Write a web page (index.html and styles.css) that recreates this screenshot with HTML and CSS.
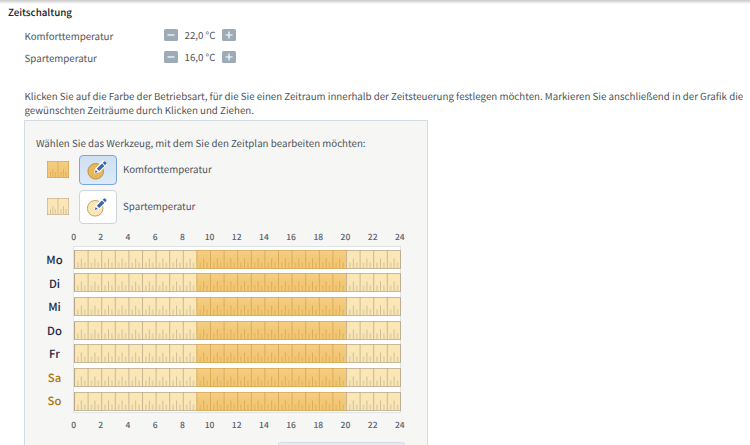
FILE: index.html
```html
<!DOCTYPE html>
<html lang="de">
<head>
<meta charset="utf-8">
<title>Zeitschaltung</title>
<link rel="stylesheet" href="styles.css">
</head>
<body>
<svg class="defs" aria-hidden="true">
  <defs>
    <linearGradient id="warm" x1="0" y1="0" x2="0" y2="1"><stop offset="0" stop-color="#f5cf86"/><stop offset=".5" stop-color="#f2c776"/><stop offset="1" stop-color="#f3c976"/></linearGradient>
    <pattern id="hour" width="13.6" height="19" patternUnits="userSpaceOnUse">
      <path d="M.5 0V19" stroke="#8f7f6e" stroke-opacity=".46"/>
      <path d="M3.9 12.5V18M7.3 8.5V18M10.7 12.5V18" stroke="#8f7f6e" stroke-opacity=".4"/>
    </pattern>
    <pattern id="hour-warm" width="13.6" height="19" patternUnits="userSpaceOnUse">
      <path d="M.5 0V19" stroke="#b98226" stroke-opacity=".42"/>
      <path d="M3.9 12.5V18M7.3 8.5V18M10.7 12.5V18" stroke="#b98226" stroke-opacity=".4"/>
    </pattern>
    <symbol id="day" viewBox="0 0 327 19">
      <path d="M0 0H327V19H0Z" fill="#fae7b5"/>
      <path d="M122.4 0H272V19H122.4Z" fill="url(#warm)"/>
      <path d="M0 0H122.4V19H0ZM272 0H327V19H272Z" fill="url(#hour)"/>
      <path d="M122.4 0H272V19H122.4Z" fill="url(#hour-warm)"/>
      <path d="M122.4 .5H.5V18.5H122.4M272 .5H326.5V18.5H272" fill="none" stroke="#a99b88" stroke-opacity=".6"/>
      <path d="M122.4 .5H272M122.4 18.5H272" stroke="#cf9c4a" stroke-opacity=".6"/>
    </symbol>
    <symbol id="pencil" viewBox="0 0 20 20" overflow="visible">
      <path d="M7.6 12.8 8.8 8.7 16.2 1.2 19.6 4.4 12.2 11.7Z" fill="#fff" stroke="#fff" stroke-width="1.2" stroke-linejoin="round"/>
      <path d="M9.8 8.7 15 3.6 17.4 6 12.2 11Z" fill="#3c64a8"/>
      <path d="M15.7 2.8 16.9 1.7Q17.7 1 18.4 1.7L19.2 2.5Q19.9 3.3 19.2 4.1L18.1 5.2Z" fill="#3c64a8"/>
      <path d="M7.7 12.9 8.7 9.9 10.8 12Z" fill="#3c64a8"/>
    </symbol>
  </defs>
</svg>
<main class="page">
  <h1 class="title">Zeitschaltung</h1>
  <div class="setting">
    <span class="setting-name">Komforttemperatur</span>
    <button class="step" aria-label="Verringern"><svg viewBox="0 0 14 12"><path d="M3.5 6H10.5"/></svg></button>
    <span class="value">22,0 °C</span>
    <button class="step" aria-label="Erhöhen"><svg viewBox="0 0 14 12"><path d="M3.5 6H10.5M7 2.5V9.5"/></svg></button>
  </div>
  <div class="setting">
    <span class="setting-name">Spartemperatur</span>
    <button class="step" aria-label="Verringern"><svg viewBox="0 0 14 12"><path d="M3.5 6H10.5"/></svg></button>
    <span class="value">16,0 °C</span>
    <button class="step" aria-label="Erhöhen"><svg viewBox="0 0 14 12"><path d="M3.5 6H10.5M7 2.5V9.5"/></svg></button>
  </div>
  <p class="intro">Klicken Sie auf die Farbe der Betriebsart, für die Sie einen Zeitraum innerhalb der Zeitsteuerung festlegen möchten. Markieren Sie anschließend in der Grafik die<br>gewünschten Zeiträume durch Klicken und Ziehen.</p>
  <section class="panel">
    <p class="hint">Wählen Sie das Werkzeug, mit dem Sie den Zeitplan bearbeiten möchten:</p>
    <div class="tool">
      <svg class="swatch" viewBox="0 0 22 17"><path d="M0 0H22V17H0Z" fill="url(#warm)"/><path d="M11 0V17M.5 0V17M21.5 0V17M0 .5H22M0 16.5H22M3.5 11V16M5.8 8V16M8.3 11V16M14 11V16M16.5 8V16M19 11V16" fill="none" stroke="#c58d32" stroke-opacity=".45" stroke-width=".9"/></svg>
      <button class="brush active" aria-label="Komfort"><svg viewBox="0 0 20 20"><circle cx="8.7" cy="11.3" r="7.8" fill="#e9b75b" stroke="#bd9145"/><use href="#pencil"/></svg></button>
      <span>Komforttemperatur</span>
    </div>
    <div class="tool">
      <svg class="swatch" viewBox="0 0 22 17"><path d="M0 0H22V17H0Z" fill="#fae7b5"/><path d="M11 0V17M.5 0V17M21.5 0V17M0 .5H22M0 16.5H22M3.5 11V16M5.8 8V16M8.3 11V16M14 11V16M16.5 8V16M19 11V16" fill="none" stroke="#998877" stroke-opacity=".42" stroke-width=".9"/></svg>
      <button class="brush" aria-label="Sparen"><svg viewBox="0 0 20 20"><circle cx="8.2" cy="11.3" r="7.8" fill="#fae7b5" stroke="#c3a263"/><use href="#pencil"/></svg></button>
      <span>Spartemperatur</span>
    </div>
    <div class="hours"><span>0</span><span>2</span><span>4</span><span>6</span><span>8</span><span>10</span><span>12</span><span>14</span><span>16</span><span>18</span><span>20</span><span>22</span><span>24</span></div>
    <div class="plan">
      <div class="days"><span>Mo</span><span>Di</span><span>Mi</span><span>Do</span><span>Fr</span><span class="weekend">Sa</span><span class="weekend">So</span></div>
      <div class="chart">
        <svg><use href="#day"/></svg>
        <svg><use href="#day"/></svg>
        <svg><use href="#day"/></svg>
        <svg><use href="#day"/></svg>
        <svg><use href="#day"/></svg>
        <svg><use href="#day"/></svg>
        <svg><use href="#day"/></svg>
      </div>
    </div>
    <div class="hours bottom"><span>0</span><span>2</span><span>4</span><span>6</span><span>8</span><span>10</span><span>12</span><span>14</span><span>16</span><span>18</span><span>20</span><span>22</span><span>24</span></div>
    <div class="next"></div>
  </section>
</main>
</body>
</html>
```
FILE: styles.css
```css
* { box-sizing: border-box; }
html, body { height: 100%; }
body {
  margin: 0;
  overflow: hidden;
  background: #fff;
  color: #4e5459;
  font: 9.73px/14px "Noto Sans CJK SC", sans-serif;
  text-rendering: geometricPrecision;
}
.defs { position: absolute; width: 0; height: 0; }
.page {
  height: 445px;
  overflow: hidden;
  background: linear-gradient(#c8c8c8, #fff 4px);
  padding: 5px 0 0 8px;
}
.title { margin: 0 0 9px; font-size: 9.8px; line-height: 14px; font-weight: 500; color: #20252a; }
.setting { display: flex; align-items: center; height: 14px; margin: 0 0 8px 16.5px; }
.setting-name { width: 139.5px; padding-top: 2px; }
.value { width: 44px; text-align: center; }
.step { width: 14px; height: 12px; padding: 0; border: 0; border-radius: 1.5px; background: #9dabb6; }
.step svg { display: block; width: 14px; height: 12px; fill: none; stroke: #fff; stroke-width: 1.2; }
.intro { margin: 26px 0 0 16.5px; line-height: 13.6px; white-space: nowrap; }
.panel {
  width: 404px;
  height: 340px;
  margin: 3px 0 0 16px;
  padding: 15px 0 0 11px;
  border: 1px solid #d3dce1;
  background: #f6f6f5;
}
.hint { margin: 0 0 4px; }
.tool { display: flex; align-items: center; height: 30px; margin: 0 0 7px 11px; }
.swatch { width: 22px; height: 17px; margin-right: 10px; }
.brush {
  flex: none;
  width: 38px;
  height: 34px;
  padding: 0;
  margin: 1px 6px 0 0;
  border: 1px solid #ccd5dc;
  border-radius: 4px;
  background: #fff;
}
.brush svg { display: block; width: 20px; height: 20px; margin: 0 0 0 7px; overflow: visible; }
.brush.active { height: 30px; border-color: #79a5e0; background: linear-gradient(#cfe0f1, #dce9f7); }
.hours {
  display: grid;
  grid-template-columns: repeat(13, 27.2px);
  width: 354px;
  margin: 9px 0 0 24px;
  height: 14px;
  font-size: 8.5px;
  text-align: center;
  font-weight: 500;
  color: #58616a;
}
.hours.bottom { margin-top: 5px; }
.plan { display: flex; margin-top: 2px; }
.days { display: grid; grid-auto-rows: 23.5px; width: 37px; padding-top: 2px; }
.days span { text-align: center; font-size: 11.3px; line-height: 24px; font-weight: 500; color: #1b2945; }
.days .weekend { color: #ad7412; }
.chart {
  display: grid;
  grid-auto-rows: 19px;
  gap: 4.67px;
  width: 328px;
  height: 167px;
  padding: 2.4px 0 0;
  border: 1px solid #dde3e8;
  background: #fff;
}
.chart svg { width: 327px; height: 19px; }
.next { width: 127px; height: 20px; margin: 10px 0 0 242px; border: 1px solid #d4dce2; border-radius: 3px; background: #e7ebef; }
```
